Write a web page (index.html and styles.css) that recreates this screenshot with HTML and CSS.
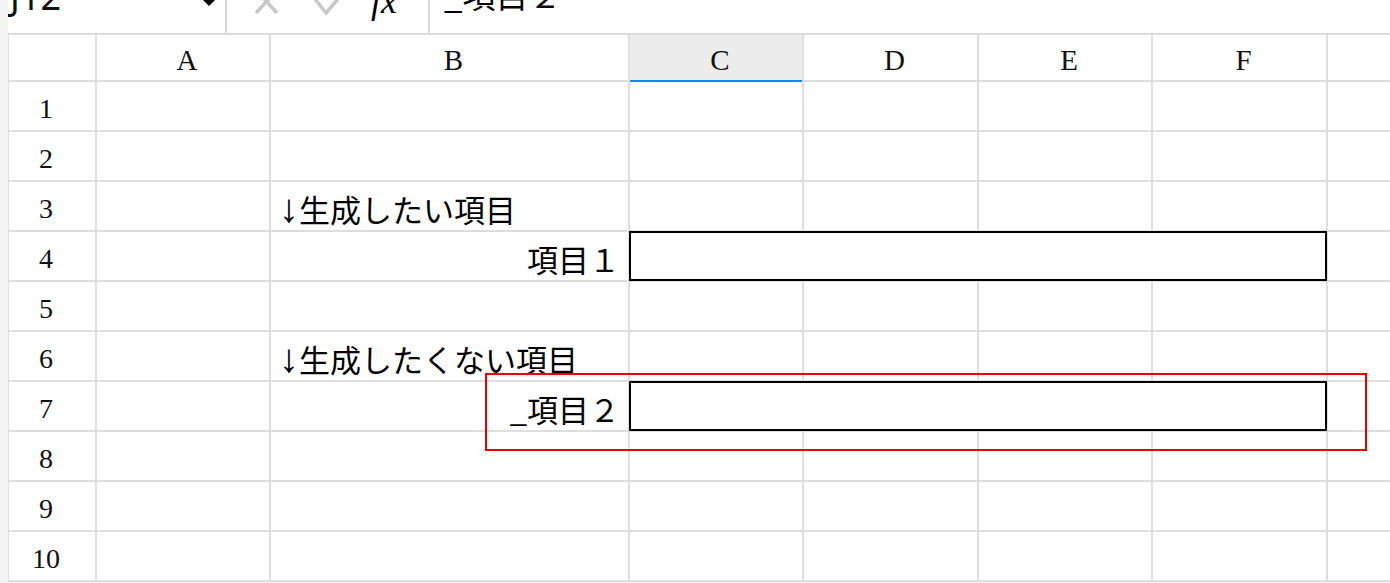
FILE: index.html
```html
<!DOCTYPE html>
<html lang="ja">
<head>
    <meta charset="UTF-8">
    <title>シート</title>
    <link rel="stylesheet" href="styles.css">
</head>
<body>
    <div class="app">
        <div class="formula-bar">
            <div class="name-box">
                <span class="cell-ref">J12</span>
                <svg class="caret" width="14" height="7" viewBox="0 0 14 7"><polygon points="0,0 14,0 7,7" fill="#000"/></svg>
            </div>
            <div class="fb-buttons">
                <svg class="fb-icon" width="27" height="28" viewBox="0 0 27 28">
                    <path d="M3 2 L24 25 M24 2 L3 25" stroke="#c8c8c8" stroke-width="3.5" fill="none"/>
                </svg>
                <svg class="fb-icon" width="27" height="28" viewBox="0 0 27 28">
                    <path d="M2 11 L13 25 L25 11" stroke="#c8c8c8" stroke-width="3.5" fill="none"/>
                </svg>
                <span class="fx">fx</span>
            </div>
            <div class="fb-input"><span>_項目２</span></div>
        </div>

        <div class="sheet">
            <!-- header row -->
            <div class="corner"></div>
            <div class="ch">A</div>
            <div class="ch">B</div>
            <div class="ch active">C</div>
            <div class="ch">D</div>
            <div class="ch">E</div>
            <div class="ch">F</div>
            <div class="ch"></div>

            <div class="rh">1</div>
            <div class="c"></div><div class="c"></div><div class="c"></div><div class="c"></div><div class="c"></div><div class="c"></div><div class="c"></div>

            <div class="rh">2</div>
            <div class="c"></div><div class="c"></div><div class="c"></div><div class="c"></div><div class="c"></div><div class="c"></div><div class="c"></div>

            <div class="rh">3</div>
            <div class="c"></div>
            <div class="c"><span class="arrow">↓</span>生成したい項目</div>
            <div class="c"></div><div class="c"></div><div class="c"></div><div class="c"></div><div class="c"></div>

            <div class="rh">4</div>
            <div class="c"></div>
            <div class="c right">項目１</div>
            <div class="c input-box"></div>
            <div class="c"></div>

            <div class="rh">5</div>
            <div class="c"></div><div class="c"></div><div class="c"></div><div class="c"></div><div class="c"></div><div class="c"></div><div class="c"></div>

            <div class="rh">6</div>
            <div class="c"></div>
            <div class="c"><span class="arrow">↓</span>生成したくない項目</div>
            <div class="c"></div><div class="c"></div><div class="c"></div><div class="c"></div><div class="c"></div>

            <div class="rh">7</div>
            <div class="c"></div>
            <div class="c right">_項目２</div>
            <div class="c input-box"></div>
            <div class="c"></div>

            <div class="rh">8</div>
            <div class="c"></div><div class="c"></div><div class="c"></div><div class="c"></div><div class="c"></div><div class="c"></div><div class="c"></div>

            <div class="rh">9</div>
            <div class="c"></div><div class="c"></div><div class="c"></div><div class="c"></div><div class="c"></div><div class="c"></div><div class="c"></div>

            <div class="rh">10</div>
            <div class="c"></div><div class="c"></div><div class="c"></div><div class="c"></div><div class="c"></div><div class="c"></div><div class="c"></div>
        </div>

        <div class="highlight"></div>
    </div>
</body>
</html>
```

FILE: styles.css
```css
body {
    margin: 0;
    width: 1390px;
    height: 583px;
    overflow: hidden;
    background: #f3f3f3;
    font-family: "Noto Sans CJK JP", sans-serif;
    color: #000;
}
.app {
    position: relative;
    padding-left: 8px;
}

/* formula bar (scrolled so only the bottom shows) */
.formula-bar {
    display: flex;
    height: 33px;
    background: #fff;
    border-bottom: 2px solid #dcdcdc;
    overflow: hidden;
}
.name-box {
    width: 219px;
    box-sizing: border-box;
    display: flex;
    justify-content: space-between;
    align-items: flex-start;
    padding: 0 9px 0 2px;
    border-right: 2px solid #d9d9d9;
}
.cell-ref {
    font-family: "Noto Sans", sans-serif;
    font-size: 36px;
    line-height: 36px;
    margin-top: -21px;
    color: #111;
}
.caret {
    margin-top: -1px;
}
.fb-buttons {
    width: 203px;
    box-sizing: border-box;
    display: flex;
    align-items: flex-start;
    padding-left: 26px;
    border-right: 2px solid #d9d9d9;
}
.fb-icon {
    margin-top: -12px;
    margin-right: 33px;
}
.fb-icon + .fb-icon {
    margin-right: 31px;
}
.fx {
    font-family: "Liberation Serif", serif;
    font-style: italic;
    font-size: 36px;
    line-height: 36px;
    margin-top: -17px;
}
.fb-input {
    flex: 1;
    padding-left: 14px;
}
.fb-input span {
    display: block;
    font-size: 33px;
    line-height: 33px;
    margin-top: -22px;
}

/* grid */
.sheet {
    display: grid;
    grid-template-columns: 86px 172px 357px 172px 173px 172px 173px 1fr;
    grid-template-rows: 45px repeat(10, 48px);
    gap: 2px;
    padding: 0 0 2px 1px;
    background: #dedede;
}
.corner {
    background: #fff;
}
.ch {
    background: #fff;
    display: flex;
    justify-content: center;
    align-items: center;
    padding: 5px 0 0 8px;
    font-family: "Liberation Serif", serif;
    font-size: 29px;
    color: #111;
}
.ch.active {
    background: #ececec;
    box-shadow: 0 2px 0 #1a86e6;
}
.rh {
    background: #fff;
    display: flex;
    justify-content: center;
    align-items: center;
    padding: 5px 12px 0 0;
    font-family: "Liberation Serif", serif;
    font-size: 28px;
    color: #111;
}
.c {
    background: #fff;
    display: flex;
    align-items: center;
    padding: 4px 8px 0;
    font-size: 31px;
    white-space: nowrap;
}
.c.right {
    justify-content: flex-end;
    padding-right: 8px;
}
.arrow {
    font-family: "Liberation Serif", serif;
    font-size: 40px;
    line-height: 0;
    margin-top: 2px;
}
.input-box {
    grid-column: span 4;
    margin: -1px;
    border: 2px solid #000;
}

.highlight {
    position: absolute;
    left: 485px;
    top: 373px;
    width: 882px;
    height: 78px;
    box-sizing: border-box;
    border: 2px solid #e80000;
    pointer-events: none;
}
```
